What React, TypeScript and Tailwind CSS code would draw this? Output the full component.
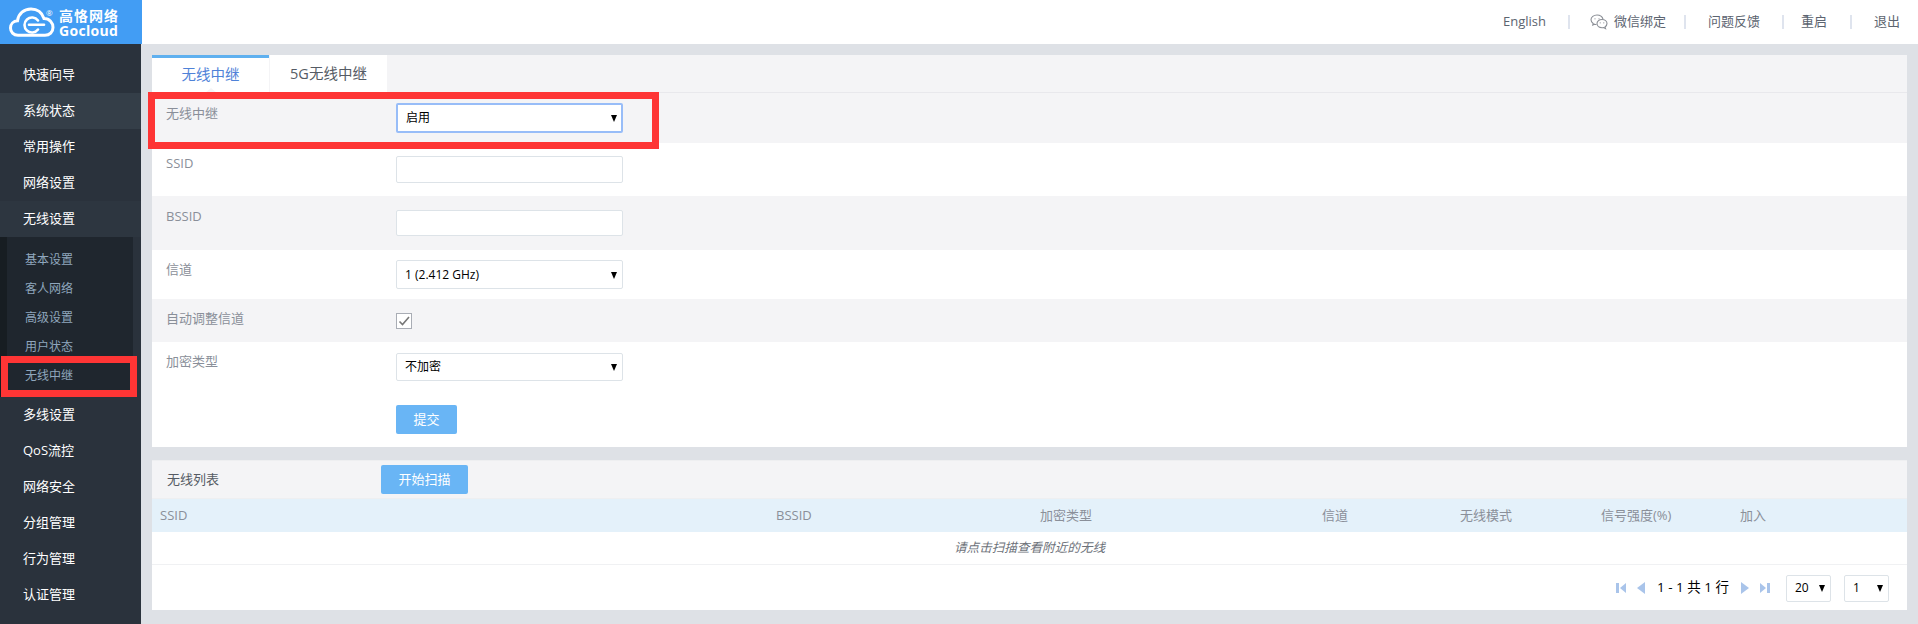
import type { ReactNode } from "react";

const font = { fontFamily: '"Open Sans", "Noto Sans CJK SC", sans-serif' };

const topMenu = ["快速向导", "系统状态", "常用操作", "网络设置", "无线设置"];
const subMenu = ["基本设置", "客人网络", "高级设置", "用户状态", "无线中继"];
const bottomMenu = ["多线设置", "QoS流控", "网络安全", "分组管理", "行为管理", "认证管理"];

const Logo = () => (
  <div className="flex h-[44px] w-[142px] shrink-0 items-center bg-[#429df4] pl-[9px] text-white">
    <svg width="50" height="30" viewBox="0 0 50 30" fill="none" stroke="white" strokeWidth="3" strokeLinecap="round">
      <path d="M9 28.3C4.5 28.3 1.5 25 1.5 21C1.5 17 4.5 14 8.5 13.8C9.5 6.5 15 2 22 2C28 2 33 5.5 35 11.5C40.5 11.5 44 16 44 20.5C44 25 40.5 28.3 36 28.3Z" />
      <path d="M29 13.5A7.5 7.5 0 1 0 29 22.5" strokeWidth="2.6" />
      <path d="M20 17.8H35" strokeWidth="2.6" />
      <text x="37" y="9" fontSize="8" fill="white" stroke="none">®</text>
    </svg>
    <div className="flex flex-col pt-[3px]">
      <span className="text-[14px] leading-[14px] font-bold tracking-[1px]">高恪网络</span>
      <span className="text-[14px] leading-[15px] font-bold tracking-[0.3px]">Gocloud</span>
    </div>
  </div>
);

const Sep = () => <span className="h-[14px] w-[2px] bg-[#dfe4ee]" />;

const WechatIcon = () => (
  <svg width="18" height="16" viewBox="0 0 18 16" fill="none" stroke="#8b8f96" strokeWidth="1.1">
    <path d="M7 1C3.7 1 1 3.1 1 5.8C1 7.3 1.9 8.6 3.2 9.5L2.8 11L4.6 10.2C5.2 10.4 5.8 10.5 6.5 10.5" />
    <path d="M13 5.2C12.4 2.8 10 1 7 1" />
    <path d="M12 5.5C9.2 5.5 7 7.3 7 9.6C7 11.9 9.2 13.7 12 13.7C12.6 13.7 13.1 13.6 13.6 13.5L15.5 14.6L15 13C16.2 12.2 17 11 17 9.6C17 7.3 14.8 5.5 12 5.5Z" />
    <circle cx="5" cy="4.8" r="0.6" fill="#8b8f96" stroke="none" />
    <circle cx="9" cy="4.8" r="0.6" fill="#8b8f96" stroke="none" />
    <circle cx="10.2" cy="8.8" r="0.6" fill="#8b8f96" stroke="none" />
    <circle cx="13.8" cy="8.8" r="0.6" fill="#8b8f96" stroke="none" />
  </svg>
);

const Header = () => (
  <header className="flex h-[44px] shrink-0 bg-white">
    <Logo />
    <div className="ml-auto flex items-center gap-[22px] pr-[18px] text-[13px] text-[#5c6470]">
      <span>English</span>
      <Sep />
      <span className="-mr-[4px] -ml-[2px] flex items-center gap-[6px]">
        <WechatIcon />
        微信绑定
      </span>
      <Sep />
      <span>问题反馈</span>
      <Sep />
      <span className="mr-[1px] -ml-[5px]">重启</span>
      <Sep />
      <span>退出</span>
    </div>
  </header>
);

const NavItem = ({ label, bg }: { label: string; bg?: string }) => (
  <div className={`flex h-[36px] items-center pl-[23px] text-[13px] text-white ${bg ?? ""}`}>{label}</div>
);

const Sidebar = () => (
  <aside className="h-full w-[141px] shrink-0 bg-[#2a323c] pt-[13px]">
    {topMenu.map((m) => (
      <NavItem key={m} label={m} bg={m === "系统状态" ? "bg-[#343e48]" : m === "无线设置" ? "bg-[#2d3640]" : undefined} />
    ))}
    <div className="mr-[8px] h-[160px] border-l-[7px] border-[#171d22] bg-[#1f262e] pt-[9px]">
      {subMenu.map((m) => (
        <div key={m} className="flex h-[28.8px] items-center pl-[18px] text-[12px] text-[#8fa6bd]">
          {m}
        </div>
      ))}
    </div>
    {bottomMenu.map((m) => (
      <NavItem key={m} label={m} />
    ))}
  </aside>
);

const Select = ({
  value,
  options,
  className,
  focused,
}: {
  value: string;
  options?: string[];
  className: string;
  focused?: boolean;
}) => (
  <div className={`relative ${className}`}>
    <select
      defaultValue={value}
      className={`h-full w-full appearance-none rounded-[2px] bg-white pl-[8px] text-[12px] text-black outline-none ${
        focused ? "border-2 border-[#98bdf8]" : "border border-[#dde3e8]"
      }`}
    >
      {(options ?? [value]).map((o) => (
        <option key={o}>{o}</option>
      ))}
    </select>
    <span className="absolute top-1/2 right-[6px] -mt-[3px] h-0 w-0 border-x-[3.5px] border-t-[7px] border-x-transparent border-t-black" />
  </div>
);

const Row = ({
  label,
  h,
  gray,
  labelPt = "pt-[10px]",
  children,
}: {
  label?: string;
  h: string;
  gray?: boolean;
  labelPt?: string;
  children: ReactNode;
}) => (
  <div className={`flex ${h} pl-[14px] ${gray ? "bg-[#f4f4f6]" : "bg-white"}`}>
    <div className={`w-[230px] shrink-0 ${labelPt} text-[13px] leading-[18px] text-[#8a8f99]`}>{label}</div>
    {children}
  </div>
);

const SettingsPanel = () => (
  <section className="bg-white">
    <div className="flex h-[38px] border-b border-[#e8e8ec] bg-[#f4f4f6]">
      <div className="relative flex w-[117px] items-center justify-center border-t-[3px] border-[#5fb0ef] bg-white text-[14.5px] text-[#4f82d8]">
        无线中继
        <span className="absolute -bottom-px left-1/2 -ml-[6px] h-0 w-0 border-x-[6px] border-b-[5px] border-x-transparent border-b-[#f4f4f6]" />
      </div>
      <div className="ml-px flex w-[117px] items-center justify-center bg-white text-[14.5px] text-[#555b64]">5G无线中继</div>
    </div>
    <Row label="无线中继" h="h-[50px]" gray labelPt="pt-[11px]">
      <Select value="启用" options={["启用", "禁用"]} focused className="mt-[10px] h-[30px] w-[227px]" />
    </Row>
    <Row label="SSID" h="h-[53px]" labelPt="pt-[11px]">
      <input className="mt-[13px] h-[27px] w-[227px] rounded-[2px] border border-[#dde3e8] bg-white outline-none" />
    </Row>
    <Row label="BSSID" h="h-[54px]" gray labelPt="pt-[11px]">
      <input className="mt-[14px] h-[26px] w-[227px] rounded-[2px] border border-[#dde3e8] bg-white outline-none" />
    </Row>
    <Row label="信道" h="h-[49px]">
      <Select value="1 (2.412 GHz)" className="mt-[10px] h-[29px] w-[227px]" />
    </Row>
    <Row label="自动调整信道" h="h-[43px]" gray>
      <span className="mt-[14px] flex h-[16px] w-[16px] items-center justify-center border border-[#a9adb5] bg-white">
        <svg width="12" height="12" viewBox="0 0 12 12" fill="none" stroke="#777" strokeWidth="1.6">
          <path d="M1.5 6.5L4.5 9.5L11 2" />
        </svg>
      </span>
    </Row>
    <Row label="加密类型" h="h-[105px]">
      <div className="pt-[11px]">
        <Select value="不加密" options={["不加密", "WPA2"]} className="h-[28px] w-[227px]" />
        <button className="mt-[24px] block h-[29px] w-[61px] rounded-[2px] bg-[#69b5f5] text-[13px] text-white">提交</button>
      </div>
    </Row>
  </section>
);

const columns = ["SSID", "BSSID", "加密类型", "信道", "无线模式", "信号强度(%)", "加入"];

const PageArrow = ({ flip, bar }: { flip?: boolean; bar?: boolean }) =>
  bar ? (
    <svg width="10" height="12" viewBox="0 0 10 12" className={flip ? "-scale-x-100" : ""}>
      <rect x="0" y="1" width="3" height="10" fill="#a9c4ea" />
      <path d="M10 1V11L4 6Z" fill="#a9c4ea" />
    </svg>
  ) : (
    <svg width="8" height="12" viewBox="0 0 8 12" className={flip ? "-scale-x-100" : ""}>
      <path d="M8 0V12L0 6Z" fill="#a9c4ea" />
    </svg>
  );

const ListPanel = () => (
  <section className="mt-[13px] bg-white">
    <div className="flex h-[39px] items-center border-y border-[#eeeff1] bg-[#f4f4f6] pl-[15px]">
      <span className="w-[214px] text-[13px] text-[#555b64]">无线列表</span>
      <button className="h-[29px] w-[87px] rounded-[2px] bg-[#69b5f5] text-[13px] text-white">开始扫描</button>
    </div>
    <div className="grid h-[33px] grid-cols-[616px_264px_282px_138px_141px_139px_1fr] items-center bg-[#e4f1fa] pl-[8px] text-[13px] text-[#8a8f99]">
      {columns.map((c) => (
        <span key={c}>{c}</span>
      ))}
    </div>
    <div className="flex h-[33px] items-center justify-center border-b border-[#f0f1f3] text-[12.6px] text-[#6d727a] italic">
      请点击扫描查看附近的无线
    </div>
    <div className="flex h-[45px] items-center justify-end pr-[18px]">
      <PageArrow bar />
      <span className="ml-[11px]">
        <PageArrow />
      </span>
      <span className="mx-[12px] text-[13.5px] text-black">1 - 1 共 1 行</span>
      <PageArrow flip />
      <span className="ml-[11px]">
        <PageArrow flip bar />
      </span>
      <Select value="20" options={["20", "50"]} className="ml-[16px] h-[27px] w-[45px]" />
      <Select value="1" className="ml-[13px] h-[27px] w-[45px]" />
    </div>
  </section>
);

export default function App() {
  return (
    <div className="flex h-screen w-full flex-col overflow-hidden" style={font}>
      <Header />
      <div className="relative flex min-h-0 flex-1">
        <Sidebar />
        <main className="min-w-0 flex-1 bg-[#dee1e6] px-[11px] pt-[11px]">
          <SettingsPanel />
          <ListPanel />
        </main>
        {/* 红色标注框 */}
        <div className="pointer-events-none absolute top-[48px] left-[148px] h-[57px] w-[511px] border-[7px] border-[#fe3535]" />
        <div className="pointer-events-none absolute top-[312px] left-[1px] h-[41px] w-[136px] border-[7px] border-[#fe3535]" />
      </div>
    </div>
  );
}
